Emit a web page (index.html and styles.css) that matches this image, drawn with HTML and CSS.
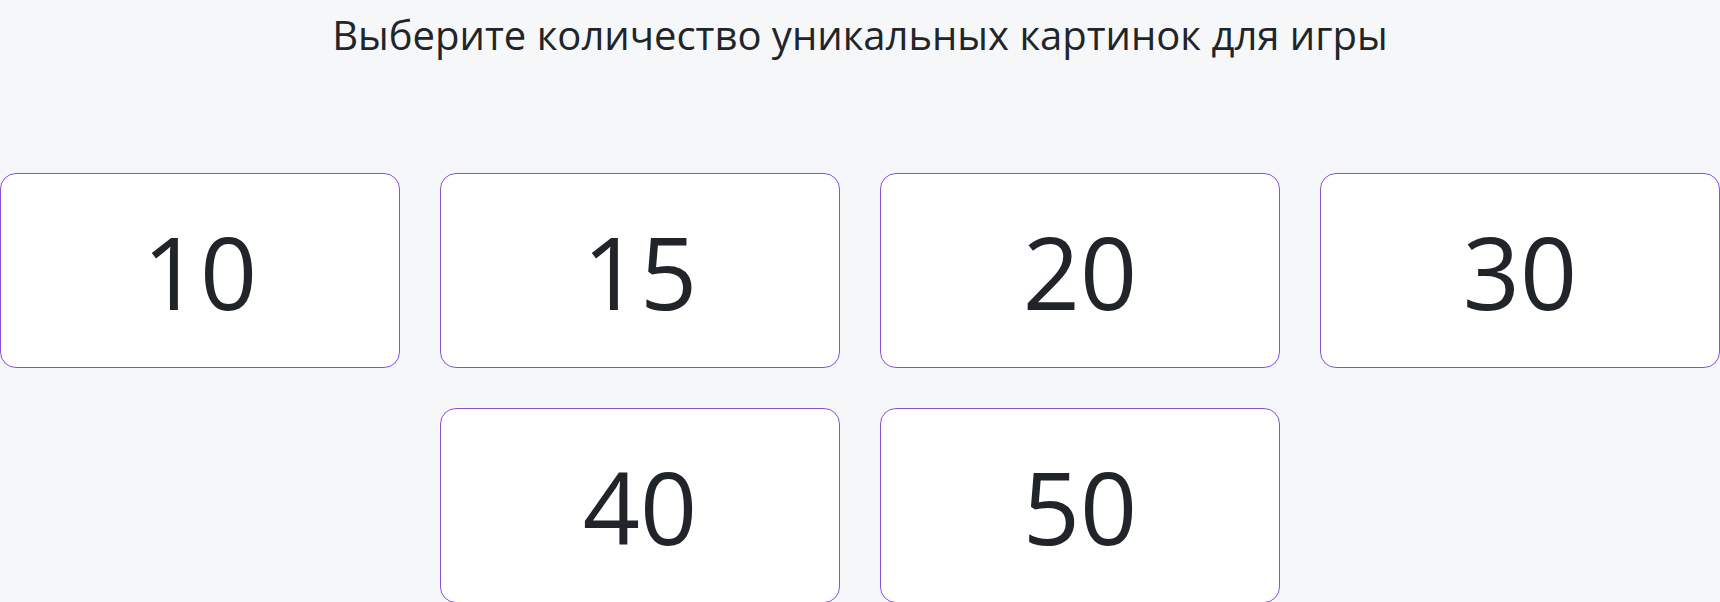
FILE: index.html
```html
<!DOCTYPE html>
<html lang="ru">
<head>
  <meta charset="UTF-8" />
  <meta name="viewport" content="width=device-width, initial-scale=1.0"/>
  <title>Выбор количества картинок</title>
  <link rel="stylesheet" href="styles.css">
</head>
<body>

  <div class="container">
    <h1 class="title">Выберите количество уникальных картинок для игры</h1>

    <div class="options">
      <button class="option">10</button>
      <button class="option">15</button>
      <button class="option">20</button>
      <button class="option">30</button>
      <button class="option">40</button>
      <button class="option">50</button>
    </div>
  </div>

</body>
</html>
```

FILE: styles.css
```css
body {
  font-family: 'Open Sans', 'Noto Sans', sans-serif;
  background: #f6f7f9;
  color: #212529;
  margin: 0;
}

.container {
  padding-top: 11px;
}

.title {
  font-size: 40px;
  font-weight: 400;
  line-height: 48px;
  text-align: center;
  margin: 0 0 114px;
}

/* Option cards */
.options {
  display: flex;
  flex-wrap: wrap;
  justify-content: center;
  gap: 40px;
}

.option {
  width: 400px;
  height: 195px;
  box-sizing: border-box;
  display: flex;
  align-items: center;
  justify-content: center;
  background: #fff;
  border: 1.5px solid #8652d8;
  border-radius: 16px;
  font-family: inherit;
  font-size: 100px;
  color: #212529;
  padding: 0;
  cursor: pointer;
  transition: background-color 0.2s ease;
}

.option:hover {
  background-color: #f3eefc;
}
```
